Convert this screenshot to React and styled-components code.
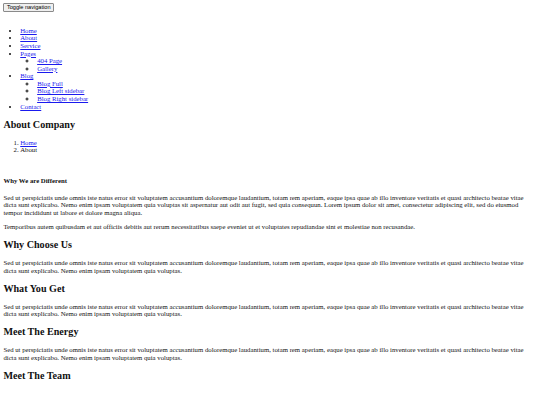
import styled, { createGlobalStyle } from "styled-components";

// page is a 1280px layout shown at 0.421875 scale, so every default size is scaled down
const GlobalStyle = createGlobalStyle`
  html, body {
    background: #ffffff;
  }
  body {
    margin: 3.375px;
    font-family: "Liberation Serif", "Times New Roman", serif;
    font-size: 6.75px;
    line-height: 7.6px;
    color: #111111;
  }
  a {
    color: #1a1aee;
    text-decoration: underline;
  }
`;

const Header = styled.div`
  display: flex;
  flex-direction: column;
  align-items: flex-start;
  padding-bottom: 7.6px;
`;

const ToggleButton = styled.button`
  appearance: none;
  box-sizing: border-box;
  height: 9px;
  padding: 0 2.5px;
  display: flex;
  align-items: center;
  font-family: "Liberation Sans", Arial, sans-serif;
  font-size: 5.625px;
  line-height: 1;
  color: #000000;
  background: #efefef;
  border: 1px solid #8a8a8a;
  border-radius: 1px;
`;

const NavList = styled.ul`
  margin: ${(props) => (props.$nested ? "0" : "6.75px 0")};
  padding-left: 16.875px;
  list-style: ${(props) => (props.$nested ? "circle" : "disc")};
`;

const Title = styled.h2`
  margin: 8.4px 0;
  font-family: "Liberation Serif", "Times New Roman", serif;
  font-size: 10.125px;
  line-height: 11.6px;
  font-weight: bold;
`;

const Crumbs = styled.ol`
  margin: 6.75px 0;
  padding-left: 16.875px;
`;

const Section = styled.section`
  padding-top: 7.5px;
`;

const SubTitle = styled.h4`
  margin: 9px 0;
  font-size: 6.75px;
  font-weight: bold;
`;

const Text = styled.p`
  margin: 6.75px 0;
`;

const lorem =
  "Sed ut perspiciatis unde omnis iste natus error sit voluptatem accusantium doloremque laudantium, totam rem aperiam, eaque ipsa quae ab illo inventore veritatis et quasi architecto beatae vitae dicta sunt explicabo. Nemo enim ipsam voluptatem quia voluptas.";

const blocks = ["Why Choose Us", "What You Get", "Meet The Energy"];

const nav = [
  { label: "Home" },
  { label: "About" },
  { label: "Service" },
  { label: "Pages", children: ["404 Page", "Gallery"] },
  { label: "Blog", children: ["Blog Full", "Blog Left sidebar", "Blog Right sidebar"] },
  { label: "Contact" },
];

const App = () => {
  return (
    <>
      <GlobalStyle />
      <Header>
        <ToggleButton type="button">Toggle navigation</ToggleButton>
      </Header>
      <NavList>
        {nav.map((item) => (
          <li key={item.label}>
            <a href="#">{item.label}</a>
            {item.children && (
              <NavList $nested>
                {item.children.map((child) => (
                  <li key={child}>
                    <a href="#">{child}</a>
                  </li>
                ))}
              </NavList>
            )}
          </li>
        ))}
      </NavList>
      <Title>About Company</Title>
      <Crumbs>
        <li>
          <a href="#">Home</a>
        </li>
        <li>About</li>
      </Crumbs>
      <Section>
        <SubTitle>Why We are Different</SubTitle>
        <Text>
          Sed ut perspiciatis unde omnis iste natus error sit voluptatem
          accusantium doloremque laudantium, totam rem aperiam, eaque ipsa quae
          ab illo inventore veritatis et quasi architecto beatae vitae dicta
          sunt explicabo. Nemo enim ipsam voluptatem quia voluptas sit
          aspernatur aut odit aut fugit, sed quia consequun. Lorem ipsum dolor
          sit amet, consectetur adipiscing elit, sed do eiusmod tempor
          incididunt ut labore et dolore magna aliqua.
        </Text>
        <Text>
          Temporibus autem quibusdam et aut officiis debitis aut rerum
          necessitatibus saepe eveniet ut et voluptates repudiandae sint et
          molestiae non recusandae.
        </Text>
        {blocks.map((heading) => (
          <div key={heading}>
            <Title>{heading}</Title>
            <Text>{lorem}</Text>
          </div>
        ))}
        <Title>Meet The Team</Title>
      </Section>
    </>
  );
};

export default App;
